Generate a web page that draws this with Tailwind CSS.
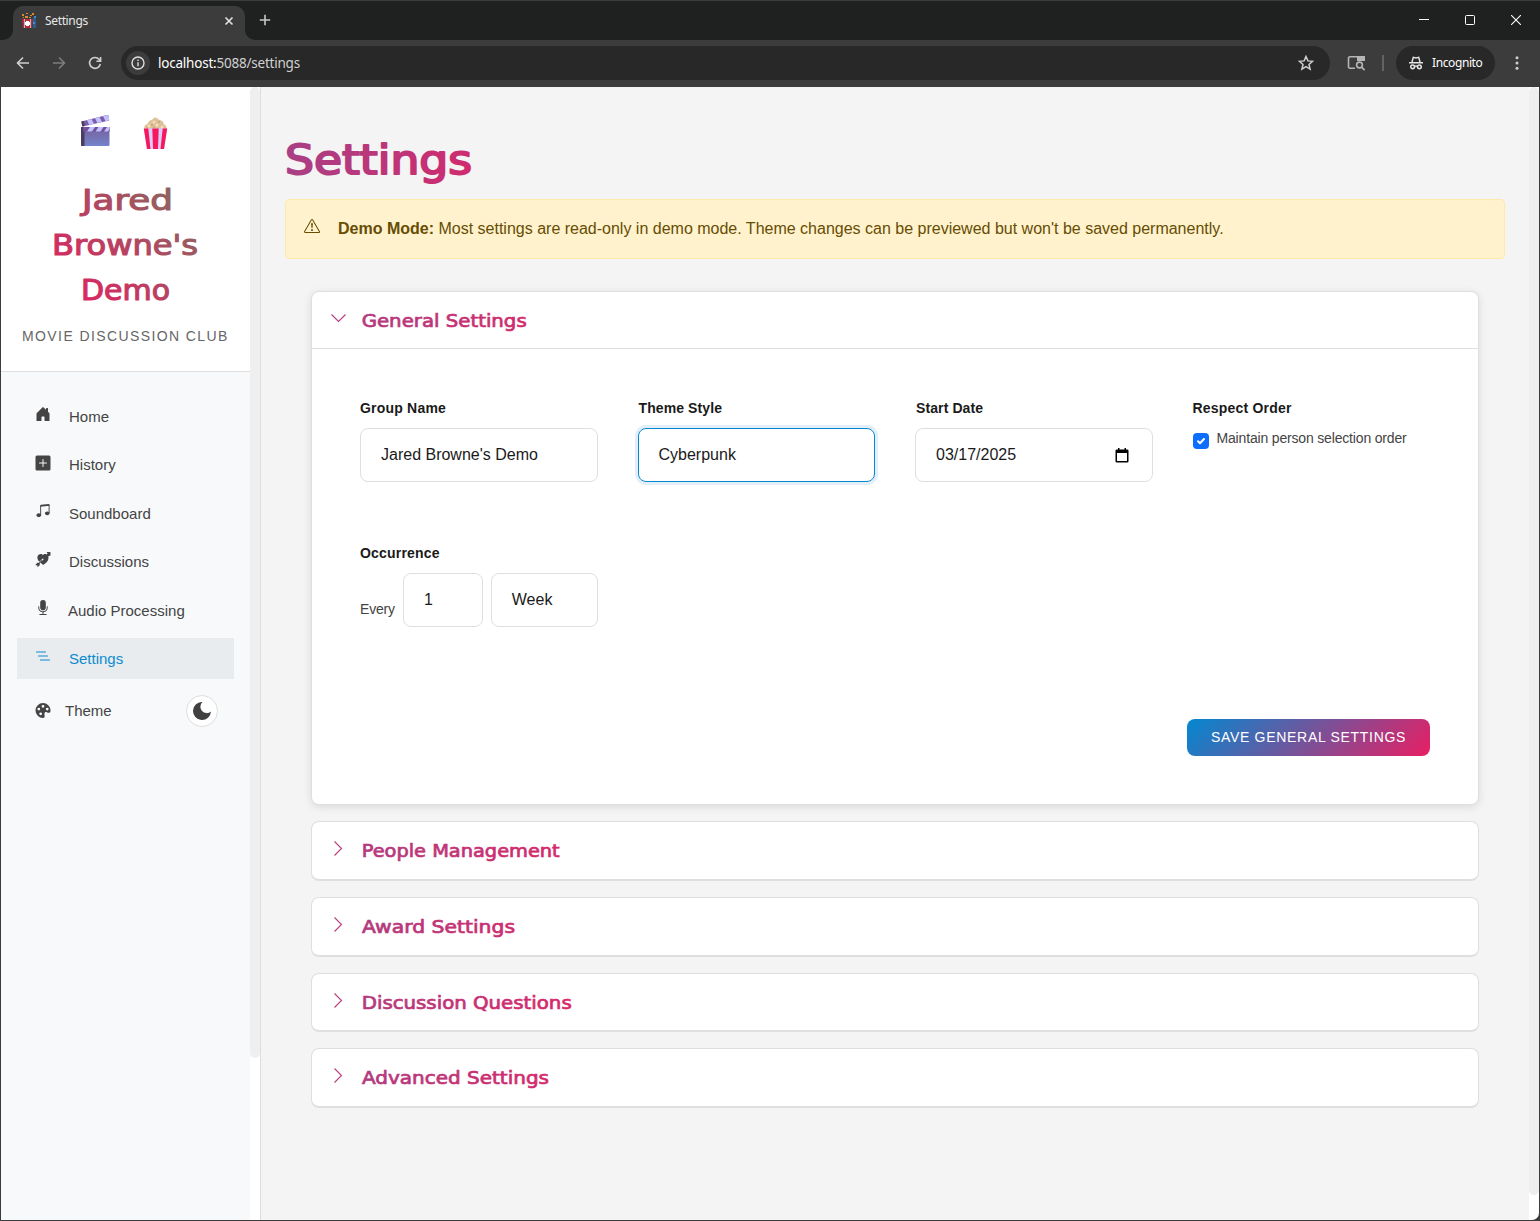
<!DOCTYPE html>
<html lang="en">
<head>
<meta charset="utf-8">
<title>Settings</title>
<script src="https://cdn.jsdelivr.net/npm/@tailwindcss/browser@4"></script>
</head>
<body class="w-[1540px] h-[1221px] overflow-hidden bg-[#3c3c3c] font-['Liberation_Sans',Arial,sans-serif]">
<svg width="0" height="0" class="absolute">
  <defs>
    <linearGradient id="brand" gradientUnits="userSpaceOnUse" x1="50" y1="160" x2="200" y2="10"><stop offset="0" stop-color="#e91e63"/><stop offset=".28" stop-color="#d22c61"/><stop offset="1" stop-color="#807060"/></linearGradient>
    <linearGradient id="title" gradientUnits="userSpaceOnUse" x1="0" y1="0" x2="190" y2="20"><stop offset="0" stop-color="#a84085"/><stop offset="1" stop-color="#cf2b6e"/></linearGradient>
    <linearGradient id="sect" gradientUnits="userSpaceOnUse" x1="0" y1="0" x2="215" y2="10"><stop offset="0" stop-color="#b23a7e"/><stop offset="1" stop-color="#d92768"/></linearGradient>
    <linearGradient id="clap" x1="0" y1="0" x2="0" y2="1"><stop offset="0" stop-color="#76609a"/><stop offset="1" stop-color="#7483cb"/></linearGradient>
  </defs>
</svg>
<div class="flex flex-col h-full">
  <!-- tab strip -->
  <div class="h-10 bg-[#1f2120] flex border-t border-[#3a3d3c] shrink-0">
    <div class="w-[13px] shrink-0 flex items-end"><div class="w-full h-3 bg-[#3c3c3c]"><div class="h-3 bg-[#1f2120] rounded-br-[10px]"></div></div></div>
    <div class="w-[232px] mt-[5px] h-[34px] bg-[#3c3c3c] rounded-t-[10px] flex items-center pl-2 pr-[11px] pb-[5px] shrink-0">
      <svg width="16" height="16" viewBox="0 0 16 16"><path fill="#d98b2b" d="M1 1h2v2H1zM5 0h2v1H5zM9 2h2v1H9zM4 3h3v2H4zM2 4h1v1H2zM8 4h2v1H8zM11 0h2v2h-2z"/><path fill="#b32b3d" d="M1 6h11l-1 9H2z"/><path fill="#b9b9b9" d="M3 6h1v9H3zM9 6h1v9H9z"/><path fill="#fff" d="M5 8h3v1h1v3H8v1H5v-1H4V9h1z"/><path fill="#24618f" d="M12 5h3v10h-3z"/><path fill="#378ee0" d="M12 9h2v2h-2zM13 3h2v2h-2z"/></svg>
      <span class="ml-2 text-[12px] text-[#e8e8e8] font-['Noto_Sans',sans-serif] tracking-[-0.35px]">Settings</span>
      <svg class="ml-auto" width="10" height="10" viewBox="0 0 10 10" stroke="#e3e3e3" stroke-width="1.6"><path d="M1.5 1.5l7 7M8.5 1.5l-7 7"/></svg>
    </div>
    <div class="w-[13px] shrink-0 flex items-end"><div class="w-full h-3 bg-[#3c3c3c]"><div class="h-3 bg-[#1f2120] rounded-bl-[10px]"></div></div></div>
    <svg class="mt-[13px] ml-[1px]" width="12" height="12" viewBox="0 0 12 12" stroke="#c7c7c7" stroke-width="1.6"><path d="M6 .8v10.4M.8 6h10.4"/></svg>
    <div class="ml-auto flex items-center gap-[36px] pr-[19px] pb-[1px]">
      <svg width="10" height="10" stroke="#fff" fill="none"><path d="M0 4.5h10"/></svg>
      <svg width="10" height="10" stroke="#fff" fill="none"><rect x=".5" y=".5" width="9" height="9" rx="1"/></svg>
      <svg width="10" height="10" stroke="#fff" fill="none" stroke-width="1.1"><path d="M0 0l10 10M10 0L0 10"/></svg>
    </div>
  </div>
  <!-- toolbar -->
  <div class="h-[47px] pb-px bg-[#3c3c3c] flex items-center shrink-0">
    <svg class="ml-4" width="14" height="14" viewBox="0 0 14 14" stroke="#cfcfcf" fill="none" stroke-width="1.6"><path d="M13 7H2M7 1.5L1.5 7 7 12.5"/></svg>
    <svg class="ml-[22px]" width="14" height="14" viewBox="0 0 14 14" stroke="#7d7d7d" fill="none" stroke-width="1.6"><path d="M1 7h11M7 1.5L12.5 7 7 12.5"/></svg>
    <svg class="ml-[22px]" width="14" height="14" viewBox="0 0 14 14" stroke="#cfcfcf" fill="none" stroke-width="1.6"><path d="M12.3 8A5.4 5.4 0 1 1 11.2 3.5L12.4 4.8M12.6 1v4.2H8.4"/></svg>
    <div class="ml-[19px] w-[1209px] h-[34px] rounded-full bg-[#282828] flex items-center pl-[5px] pr-4">
      <div class="size-6 rounded-full bg-[#3c3c3c] flex items-center justify-center"><svg width="14" height="14" viewBox="0 0 14 14" fill="none" stroke="#dedede" stroke-width="1.4"><circle cx="7" cy="7" r="6"/><path d="M7 6.2v4M7 3.5v1.5"/></svg></div>
      <span class="ml-2 text-[13.5px] text-[#d0d0d0] font-['Noto_Sans',sans-serif] whitespace-nowrap tracking-[-0.22px]"><span class="text-white">localhost:</span>5088/settings</span>
      <svg class="ml-auto" width="16" height="16" viewBox="0 0 16 16" fill="none" stroke="#cfcfcf" stroke-width="1.5"><path d="M8 1.5l1.9 4.4 4.7.4-3.6 3.1 1.1 4.7L8 11.6l-4.1 2.5L5 9.4 1.4 6.3l4.7-.4z"/></svg>
    </div>
    <svg class="ml-[17px]" width="18" height="16" viewBox="0 0 18 16" fill="none" stroke="#b5b5b5" stroke-width="1.6"><path d="M8 13.2H3a1.5 1.5 0 0 1-1.5-1.5V3.2A1.5 1.5 0 0 1 3 1.7h13v4"/><path d="M10 1h8v5h-8z" fill="#b5b5b5" stroke="none"/><circle cx="12.5" cy="10" r="2.9"/><path d="M14.6 12.1l3 3"/></svg>
    <div class="ml-[17px] w-[1.5px] h-4 bg-[#636363]"></div>
    <div class="ml-[12.5px] w-[99px] h-[34px] rounded-full bg-[#282828] flex items-center pl-3">
      <svg width="16" height="14" viewBox="0 0 16 14" fill="none" stroke="#e3e3e3" stroke-width="1.5"><path d="M1 6.7h14M4 6l1.3-4.7 2.7.6 2.7-.6L12 6"/><circle cx="4.6" cy="10.8" r="1.9"/><circle cx="11.4" cy="10.8" r="1.9"/><path d="M6.5 10.4q1.5-.8 3 0"/></svg>
      <span class="ml-[8px] text-[12px] text-white font-['Noto_Sans',sans-serif] tracking-[-0.4px]">Incognito</span>
    </div>
    <svg class="ml-5" width="4" height="14" viewBox="0 0 4 14" fill="#d0d0d0"><circle cx="2" cy="1.7" r="1.5"/><circle cx="2" cy="7" r="1.5"/><circle cx="2" cy="12.3" r="1.5"/></svg>
  </div>
  <!-- page -->
  <div class="h-[1133px] flex mx-px bg-white rounded-br-[7px] overflow-hidden">
    <aside class="w-[249px] bg-[#f8f9fb] shrink-0">
      <div class="h-[285px] bg-white border-b border-[#dedede] flex flex-col">
        <div class="flex pl-[80px] pt-[27px] gap-[33px] h-[83px]">
          <svg width="29" height="33" viewBox="0 0 29 33"><path fill="#7a5cab" d="M.5 7.500L26 1q1.500-.3 1.700 1l.5 4.500L1.500 12.500z"/><path fill="#c3c1fb" d="M6 6.200l4.500-1.200 2.500 4.800-4.700 1.200zM14 4.100l4.500-1.200 2.500 5-4.700 1.100zM22 2l4-1 1.700 1 .5 4.300-3.700.900z"/><path fill="#493d62" d="M.3 7.600l2.500-.7 1 5-2.600.7z"/><rect y="13" width="28.5" height="19" rx="1" fill="url(#clap)"/><path fill="#493d62" d="M0 13h3.500v19H1q-1 0-1-1z"/><path fill="#71519f" d="M2 13h26.500v4.500H2z"/><path fill="#c3c1fb" d="M9 13h5l-3 4.500H6zM17.500 13h5l-3 4.500h-5zM26 13h2.500v2L27 17.500h-4z"/></svg>
          <svg class="mt-[3px]" width="25" height="33" viewBox="0 0 25 33"><path d="M1.500 12q-1-4 3-5Q6 3 9 3q3-4.500 6.500-.5 5 1 5.500 5 3 1 2.500 4.500z" fill="#dfc199"/><g fill="#f3dfbf"><circle cx="11" cy="5" r="1.500"/><circle cx="6" cy="9" r="1.500"/><circle cx="14" cy="8" r="1.500"/><circle cx="19" cy="10" r="1.500"/></g><g fill="#c9a679"><circle cx="9" cy="8" r="1"/><circle cx="16" cy="5" r="1"/><circle cx="11" cy="10.500" r="1"/><circle cx="4" cy="11" r="1"/></g><path d="M.8 11.500h23.400L21 32H4z" fill="#d9cdfd"/><path d="M.8 11.500h4.500L7.500 32H4zM9.300 11.500h6.400L15 32h-5zM19.700 11.500h4.500L21 32h-3.500z" fill="#f7175c"/></svg>
        </div>
        <svg class="shrink-0" width="249" height="150" font-family="DejaVu Sans, sans-serif" font-size="27.5" fill="url(#brand)" stroke="url(#brand)" stroke-width="1.1" stroke-linejoin="round">
          <text x="81" y="40" textLength="91" lengthAdjust="spacingAndGlyphs">Jared</text>
          <text x="51" y="85" textLength="146" lengthAdjust="spacingAndGlyphs">Browne's</text>
          <text x="80" y="130" textLength="89" lengthAdjust="spacingAndGlyphs">Demo</text>
        </svg>
        <div class="mt-[6px] pl-[21px] text-[14px] leading-5 tracking-[1.4px] text-[#666] whitespace-nowrap">MOVIE DISCUSSION CLUB</div>
      </div>
      <nav class="pt-6 px-4 flex flex-col gap-[7.4px] text-[15px] text-[#444]">
        <div class="h-[41px] flex items-center pl-[18px]"><svg class="-mt-[6px]" width="16" height="16" viewBox="0 0 16 16" fill="currentColor"><path d="M6.500 14.500v-3.505c0-.245.25-.495.5-.495h2c.25 0 .5.25.5.5v3.500a.5.500 0 0 0 .5.500h4a.5.500 0 0 0 .5-.5v-7a.5.500 0 0 0-.146-.354L13 5.793V2.500a.5.500 0 0 0-.5-.5h-1a.5.500 0 0 0-.5.500v1.293L8.354 1.146a.5.500 0 0 0-.708 0l-6 6A.5.500 0 0 0 1.500 7.500v7a.5.500 0 0 0 .5.500h4a.5.500 0 0 0 .5-.5"/></svg><span class="ml-[18px] mt-[2px]">Home</span></div>
        <div class="h-[41px] flex items-center pl-[18px]"><svg class="-mt-[4px]" width="16" height="16" viewBox="0 0 16 16" fill="currentColor"><path d="M2 .5A1.500 1.500 0 0 0 .5 2v12A1.500 1.500 0 0 0 2 15.500h12a1.500 1.500 0 0 0 1.500-1.500V2A1.500 1.500 0 0 0 14 .5zm6.500 4v3h3a.5.500 0 0 1 0 1h-3v3a.5.500 0 0 1-1 0v-3h-3a.5.500 0 0 1 0-1h3v-3a.5.500 0 0 1 1 0"/></svg><span class="ml-[18px] mt-px">History</span></div>
        <div class="h-[41px] flex items-center pl-[18px]"><svg class="-mt-[6px]" width="16" height="15" viewBox="0 0 16 16" fill="currentColor"><path d="M6 13c0 1.105-1.120 2-2.500 2S1 14.105 1 13s1.120-2 2.500-2 2.500.896 2.500 2m9-2c0 1.105-1.120 2-2.500 2s-2.500-.895-2.500-2 1.120-2 2.500-2 2.500.895 2.500 2"/><path d="M14 11V2h1v9zM6 3v10H5V3z"/><path d="M5 2.905a1 1 0 0 1 .9-.995l8-.8a1 1 0 0 1 1.100.995V3L5 4z"/></svg><span class="ml-[18px] mt-[2px]">Soundboard</span></div>
        <div class="h-[41px] flex items-center pl-[18px]"><svg class="-mt-[4px]" width="16" height="15" viewBox="0 0 16 16" fill="currentColor"><path d="M8.500 13.700C13 10.700 14.500 7.500 13.600 5L14.500 4h1a.5.500 0 0 0 .5-.5V.5a.5.500 0 0 0-.5-.5h-3a.5.500 0 0 0-.35.85L13 1.700l-1 1C10.400 1.700 8.500 2.200 8 3.400 6.800 1.300 2.800 1.700 2.100 5c-.3 1.700.3 3.600 2 5.500L7.500 7.200a.6.600 0 0 1 .9.900L5.300 11.200q1.200 1.300 2.700 2.300z"/><path d="M6.700 8.600L3.700 11.500H2L.2 13.300a.4.400 0 0 0 .3.700H2v1.500a.4.400 0 0 0 .7.300l1.800-1.600v-1.900l2.900-3z"/></svg><span class="ml-[18px] mt-px">Discussions</span></div>
        <div class="h-[41px] flex items-center pl-[18px]"><svg class="-mt-[6px]" width="16" height="15" viewBox="0 0 16 16" fill="currentColor"><path d="M5 3a3 3 0 0 1 6 0v5a3 3 0 0 1-6 0z"/><path d="M3.500 6.500A.5.500 0 0 1 4 7v1a4 4 0 0 0 8 0V7a.5.500 0 0 1 1 0v1a5 5 0 0 1-4.500 4.975V15h3a.5.500 0 0 1 0 1h-7a.5.500 0 0 1 0-1h3v-2.025A5 5 0 0 1 3 8V7a.5.500 0 0 1 .5-.5"/></svg><span class="ml-[17px] mt-[2px]">Audio Processing</span></div>
        <div class="h-[41px] flex items-center pl-[18px] bg-[#e8ecef] text-[#0d8bd0]"><svg class="-mt-[5px]" width="16" height="14" viewBox="0 0 16 14" stroke="#0d8bd0" stroke-width="1.1" stroke-linecap="round"><path d="M1.500 3h9M3.500 7h9M5.500 11h9"/></svg><span class="ml-[18px] mt-px">Settings</span></div>
        <div class="h-8 mt-[8.4px] flex items-center pl-[18px] pr-4"><svg width="16" height="15" viewBox="0 0 16 16" fill="currentColor"><path d="M12.433 10.070C14.133 10.585 16 11.150 16 8a8 8 0 1 0-8 8c1.996 0 1.826-1.504 1.649-3.080-.124-1.101-.252-2.237.351-2.920.465-.527 1.420-.237 2.433.070M8 5a1.500 1.500 0 1 1 0-3 1.500 1.500 0 0 1 0 3m4.500 3a1.500 1.500 0 1 1 0-3 1.500 1.500 0 0 1 0 3M5 6.500a1.500 1.500 0 1 1-3 0 1.500 1.500 0 0 1 3 0m.5 6.500a1.500 1.500 0 1 1 0-3 1.500 1.500 0 0 1 0 3"/></svg><span class="ml-[14px] mt-[2px]">Theme</span><div class="ml-auto size-8 rounded-full bg-white border border-[#dedede] flex items-center justify-center"><svg class="mt-px" width="18" height="18" viewBox="0 0 18 18" fill="#404040"><path d="M9.500 0A9 9 0 1 0 18 9.500 5.500 5.500 0 0 1 9.500 0"/></svg></div></div>
      </nav>
    </aside>
    <div class="w-[11px] shrink-0 bg-white border-r border-[#dedede]"><div class="h-[971px] rounded-full bg-[#efefef]"></div></div>
    <main class="w-[1268px] shrink-0 bg-[#f4f4f4] px-6 pt-12">
      <svg width="400" height="64" font-family="DejaVu Sans, sans-serif" font-size="40" fill="url(#title)" stroke="url(#title)" stroke-width="2" stroke-linejoin="round"><text x="0" y="38.5" textLength="187" lengthAdjust="spacingAndGlyphs">Settings</text></svg>
      <div class="h-[60px] bg-[#fff2cd] border border-[#ffe9a8] rounded flex items-center pl-[18px] pb-[1px] text-[#664d03] text-[16px]">
        <svg class="-mt-[5px]" width="16" height="16" viewBox="0 0 16 16" fill="currentColor"><path d="M7.938 2.016A.13.130 0 0 1 8.002 2a.13.130 0 0 1 .063.016.15.150 0 0 1 .054.057l6.857 11.667c.036.060.035.124.002.183a.2.200 0 0 1-.054.060.1.100 0 0 1-.066.017H1.146a.1.100 0 0 1-.066-.017.2.200 0 0 1-.054-.060.18.180 0 0 1 .002-.183L7.884 2.073a.15.150 0 0 1 .054-.057m1.044-.45a1.130 1.130 0 0 0-1.960 0L.165 13.233c-.457.778.091 1.767.980 1.767h13.713c.889 0 1.438-.990.980-1.767z"/><path d="M7.002 12a1 1 0 1 1 2 0 1 1 0 0 1-2 0M7.100 5.995a.905.905 0 1 1 1.800 0l-.350 3.507a.552.552 0 0 1-1.100 0z"/></svg>
        <p class="ml-[18px]"><b>Demo Mode:</b> Most settings are read-only in demo mode. Theme changes can be previewed but won't be saved permanently.</p>
      </div>
      <div class="mt-[32px] ml-[26px] w-[1168px] flex flex-col gap-4">
        <section class="h-[514px] bg-white border border-[#dfdfdf] rounded-lg shadow-[0_2px_8px_rgba(0,0,0,0.11)]">
          <div class="h-[57px] border-b border-[#dfdfdf] flex pl-[18px]">
            <svg class="mt-[21px]" width="17" height="10" viewBox="0 0 17 10" fill="none" stroke="#b93b80" stroke-width="1.1"><path d="M1.500 1.500l7 7 7-7"/></svg>
            <svg class="ml-[14px]" width="300" height="56" font-family="DejaVu Sans, sans-serif" font-size="17.5" fill="url(#sect)" stroke="url(#sect)" stroke-width=".7"><text x=".7" y="35" textLength="165" lengthAdjust="spacingAndGlyphs">General Settings</text></svg>
          </div>
          <div class="px-12 pt-[49px]">
            <div class="grid grid-cols-4 gap-x-10 gap-y-[61px]">
              <div><div class="h-[30px] leading-5 text-[14px] font-bold tracking-[0.2px] text-[#1a1a1a]">Group Name</div><div class="h-[54px] border border-[#dfdfdf] rounded-lg flex items-center px-5 text-[#1a1a1a]">Jared Browne's Demo</div></div>
              <div><div class="h-[30px] leading-5 pl-px text-[14px] font-bold tracking-[0.1px] text-[#1a1a1a]">Theme Style</div><div class="h-[54px] border border-[#0288d1] rounded-lg shadow-[0_0_0_3px_#e2eef8] flex items-center px-5 text-[#1a1a1a]">Cyberpunk</div></div>
              <div><div class="h-[30px] leading-5 pl-px text-[14px] font-bold tracking-[0.1px] text-[#1a1a1a]">Start Date</div><div class="h-[54px] border border-[#dfdfdf] rounded-lg flex items-center pl-5 pr-[23px] text-[#1a1a1a]">03/17/2025<svg class="ml-auto" width="14" height="15" viewBox="0 0 14 15"><path fill="#000" fill-rule="evenodd" d="M3 0h1.500v1.500h5V0H11v1.500h1.200q1.300 0 1.300 1.300v10.400q0 1.300-1.300 1.300H1.800Q.5 14.500.5 13.200V2.800q0-1.300 1.300-1.300H3zM2 5v8h10V5z"/></svg></div></div>
              <div><div class="h-[30px] leading-5 text-[14px] font-bold tracking-[0.2px] text-[#1a1a1a]">Respect Order</div><div class="flex"><div class="mt-[5px] size-4 rounded bg-[#0d6efd] flex items-center justify-center"><svg width="16" height="16" viewBox="0 0 16 16" fill="none" stroke="#fff" stroke-width="2" stroke-linecap="round" stroke-linejoin="round"><path d="M5 8.300l2 2 4-4.300"/></svg></div><span class="ml-2 text-[14px] tracking-[-0.17px] leading-5 text-[#444] whitespace-nowrap">Maintain person selection order</span></div></div>
              <div><div class="h-[30px] leading-5 text-[14px] font-bold tracking-[0.2px] text-[#1a1a1a]">Occurrence</div><div class="flex items-center gap-2"><span class="w-[35px] text-[14px] tracking-[-0.17px] text-[#444] pt-[18px]">Every</span><div class="w-20 h-[54px] border border-[#dfdfdf] rounded-lg flex items-center px-5 text-[#1a1a1a]">1</div><div class="w-[107px] h-[54px] border border-[#dfdfdf] rounded-lg flex items-center px-5 text-[#1a1a1a]">Week</div></div></div>
            </div>
            <div class="mt-[92px] flex justify-end"><div class="w-[243px] h-[37px] rounded-lg bg-[linear-gradient(135deg,#0288d1,#e91e63)] text-white text-[14px] tracking-[0.7px] flex items-center justify-center whitespace-nowrap">SAVE GENERAL SETTINGS</div></div>
          </div>
        </section>
        <section class="h-[60px] bg-white border border-b-2 border-[#dfdfdf] rounded-lg flex pl-[21px]"><svg class="mt-[18px]" width="10" height="17" viewBox="0 0 10 17" fill="none" stroke="#b93b80" stroke-width="1.1"><path d="M1.500 1.500l7 7-7 7"/></svg><svg class="ml-[18px]" width="300" height="56" font-family="DejaVu Sans, sans-serif" font-size="17.5" fill="url(#sect)" stroke="url(#sect)" stroke-width=".7"><text x=".7" y="35" textLength="198" lengthAdjust="spacingAndGlyphs">People Management</text></svg></section>
        <section class="h-[60px] bg-white border border-b-2 border-[#dfdfdf] rounded-lg flex pl-[21px]"><svg class="mt-[18px]" width="10" height="17" viewBox="0 0 10 17" fill="none" stroke="#b93b80" stroke-width="1.1"><path d="M1.500 1.500l7 7-7 7"/></svg><svg class="ml-[18px]" width="300" height="56" font-family="DejaVu Sans, sans-serif" font-size="17.5" fill="url(#sect)" stroke="url(#sect)" stroke-width=".7"><text x="1" y="35" textLength="153" lengthAdjust="spacingAndGlyphs">Award Settings</text></svg></section>
        <section class="h-[59px] bg-white border border-b-2 border-[#dfdfdf] rounded-lg flex pl-[21px]"><svg class="mt-[18px]" width="10" height="17" viewBox="0 0 10 17" fill="none" stroke="#b93b80" stroke-width="1.1"><path d="M1.500 1.500l7 7-7 7"/></svg><svg class="ml-[18px]" width="300" height="56" font-family="DejaVu Sans, sans-serif" font-size="17.5" fill="url(#sect)" stroke="url(#sect)" stroke-width=".7"><text x=".7" y="35" textLength="210" lengthAdjust="spacingAndGlyphs">Discussion Questions</text></svg></section>
        <section class="h-[60px] bg-white border border-b-2 border-[#dfdfdf] rounded-lg flex pl-[21px]"><svg class="mt-[18px]" width="10" height="17" viewBox="0 0 10 17" fill="none" stroke="#b93b80" stroke-width="1.1"><path d="M1.500 1.500l7 7-7 7"/></svg><svg class="ml-[18px]" width="300" height="56" font-family="DejaVu Sans, sans-serif" font-size="17.5" fill="url(#sect)" stroke="url(#sect)" stroke-width=".7"><text x="1" y="35" textLength="187" lengthAdjust="spacingAndGlyphs">Advanced Settings</text></svg></section>
      </div>
    </main>
    <div class="w-[10px] shrink-0"><div class="h-[1108px] rounded-full bg-[#eeeeee]"></div></div>
  </div>
</div>
</body>
</html>
